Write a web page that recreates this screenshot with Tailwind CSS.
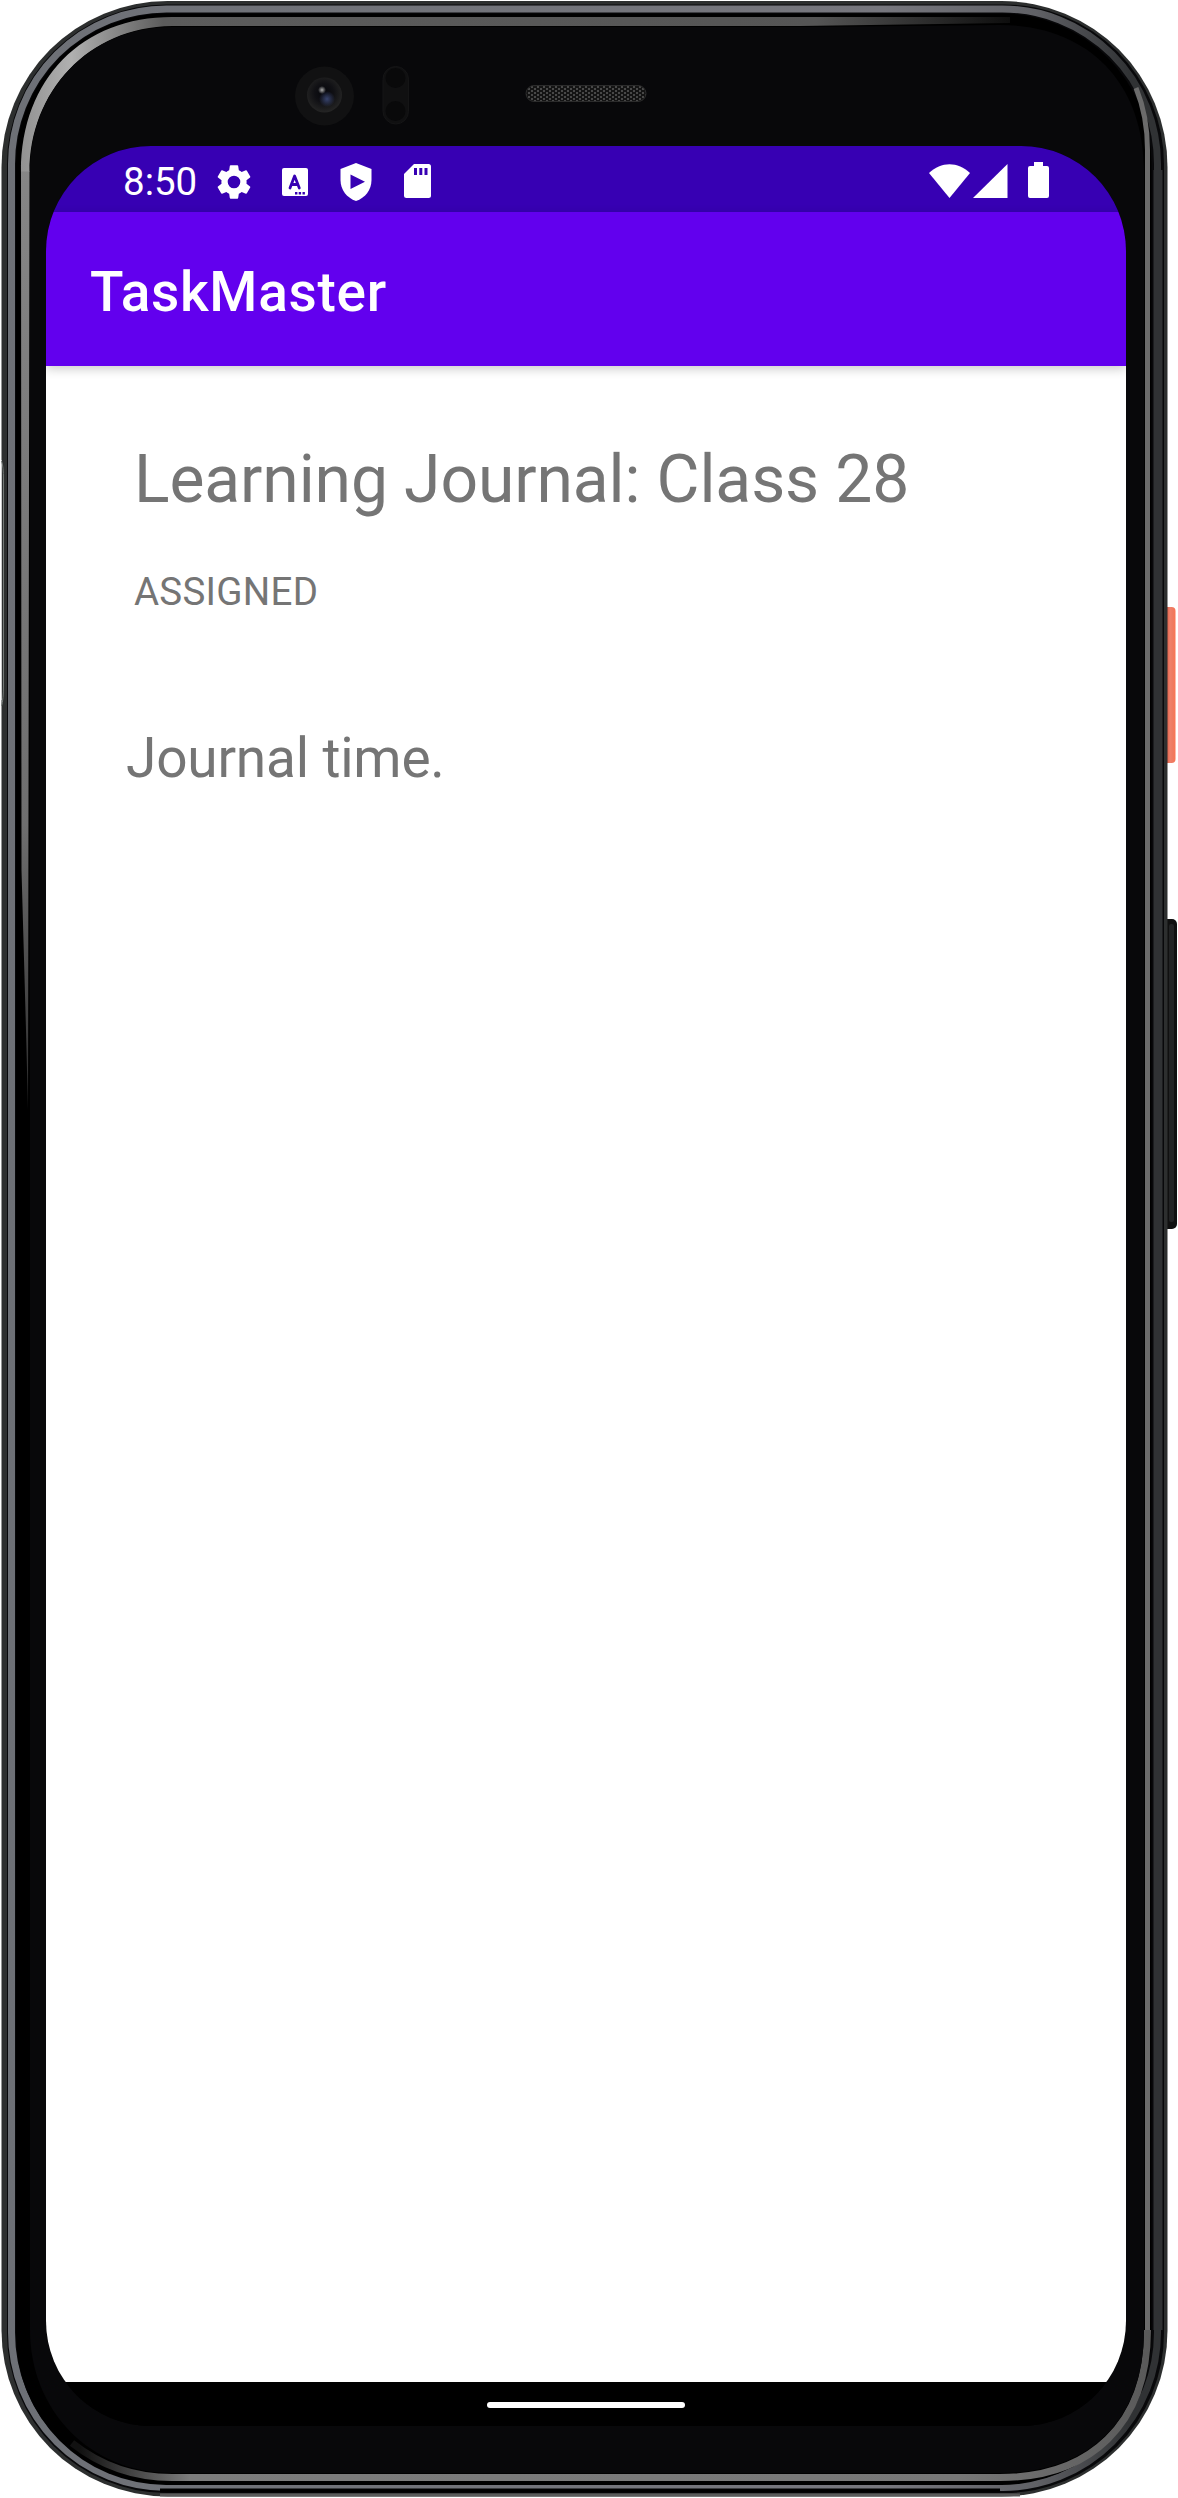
<!DOCTYPE html>
<html lang="en">
<head>
<meta charset="utf-8">
<title>TaskMaster</title>
<script src="https://cdn.jsdelivr.net/npm/@tailwindcss/browser@4"></script>
</head>
<body class="bg-white">
<div class="relative w-[1178px] h-[2498px] overflow-hidden pt-[146px] pl-[46px] font-[Roboto,sans-serif]">
  <!-- Device body -->
  <svg class="absolute inset-0" width="1178" height="2498" viewBox="0 0 1178 2498" fill="none">
    <defs>
      <linearGradient id="rim" x1="0" y1="0" x2="1178" y2="0" gradientUnits="userSpaceOnUse"><stop offset="0" stop-color="#6d7076"/><stop offset=".75" stop-color="#77777e"/><stop offset=".88" stop-color="#606166"/><stop offset=".96" stop-color="#303234"/><stop offset="1" stop-color="#303234"/></linearGradient>
      <linearGradient id="hlTop" x1="0" y1="0" x2="1020" y2="0" gradientUnits="userSpaceOnUse"><stop offset="0" stop-color="#858585"/><stop offset=".07" stop-color="#b0b0b0"/><stop offset=".16" stop-color="#5c5c5c"/><stop offset=".8" stop-color="#555"/><stop offset="1" stop-color="#0a0a0a"/></linearGradient>
      <linearGradient id="hlLeft" x1="0" y1="160" x2="0" y2="1110" gradientUnits="userSpaceOnUse"><stop offset="0" stop-color="#868686"/><stop offset=".7" stop-color="#6e6e6e"/><stop offset="1" stop-color="#2a2a2a"/></linearGradient>
      <linearGradient id="hlBot" x1="80" y1="0" x2="1178" y2="0" gradientUnits="userSpaceOnUse"><stop offset="0" stop-color="#111"/><stop offset=".1" stop-color="#7c7c7c"/><stop offset=".8" stop-color="#777"/><stop offset="1" stop-color="#555"/></linearGradient>
      <linearGradient id="power" x1="1166" y1="0" x2="1176" y2="0" gradientUnits="userSpaceOnUse"><stop offset="0" stop-color="#d9583f"/><stop offset=".4" stop-color="#f0806a"/><stop offset=".7" stop-color="#ee7a60"/><stop offset="1" stop-color="#ff7350"/></linearGradient>
      <radialGradient id="lens" cx="324" cy="93" r="19" gradientUnits="userSpaceOnUse"><stop offset="0" stop-color="#05060b"/><stop offset=".5" stop-color="#101014"/><stop offset=".8" stop-color="#1c1c1d"/><stop offset="1" stop-color="#242424"/></radialGradient>
      <radialGradient id="glint"><stop offset="0" stop-color="#aaa"/><stop offset="1" stop-color="#aaa" stop-opacity="0"/></radialGradient>
      <radialGradient id="blue"><stop offset="0" stop-color="#38446e"/><stop offset="1" stop-color="#38446e" stop-opacity="0"/></radialGradient>
      <pattern id="mesh" width="6" height="4" patternUnits="userSpaceOnUse"><rect width="6" height="4" fill="#141414"/><rect width="2" height="2" fill="#484848"/><rect x="3" y="2" width="2" height="2" fill="#484848"/></pattern>
    </defs>
    <rect x="1162" y="607" width="13.500" height="156" rx="4" fill="url(#power)"/>
    <rect x="1162" y="919" width="15" height="310" rx="5" fill="#101010"/>
    <rect x="1169" y="924" width="5" height="298" rx="2" fill="#222324"/>
    <rect x="1.500" y="1" width="1166" height="2495.500" rx="166" fill="#2d2f2f"/>
    <path d="M160 2495H1020" stroke="#5a5a5a" stroke-width="3"/>
    <rect x="7" y="4.500" width="1157" height="2488.500" rx="160" fill="#08080a"/>
    <rect x="11.500" y="9" width="1146" height="2478.500" rx="155" stroke="url(#rim)" stroke-width="7"/>
    <path d="M1158 170V2330" stroke="#303234" stroke-width="9"/>
    <path d="M160 2490.500H1000" stroke="#000" stroke-width="4"/>
    <rect x="16" y="13.500" width="1135.500" height="2471.500" rx="150" fill="#000"/>
    <path d="M21 172C21 78 83 17 172 17H1010V23L800 26H172C88 27 29.500 92 29.500 172Z" fill="url(#hlTop)"/>
    <path d="M1147.500 2330V150C1147.500 125 1143 105 1136 88" stroke="#6b6b6b" stroke-width="5"/>
    <path d="M1147.500 2330C1147.500 2425 1090 2477.500 1000 2477.500H172C130 2477.500 96 2462 72 2443" stroke="url(#hlBot)" stroke-width="7"/>
    <path d="M30 172C30 92 88 27 172 27H800L1000 25C1090 25 1144 85 1144 170V2330C1144 2420 1090 2473 1000 2473H172C90 2473 30 2410 30 2330Z" fill="#08080a"/>
    <path d="M21 171.500H29.500L28 1110L26 1030L21.500 870Z" fill="url(#hlLeft)"/>
    <path d="M0 460H1.500V700H0Z" fill="#fff"/>
    <path d="M1.500 461Q3.500 466 3.500 480V685Q3.500 700 1.500 706" stroke="#747a77"/>
    <circle cx="324.500" cy="96" r="29.500" fill="#111112"/>
    <circle cx="324.500" cy="95" r="17.500" fill="url(#lens)"/>
    <circle cx="327" cy="99" r="8" fill="url(#blue)"/>
    <circle cx="322" cy="90" r="4" fill="url(#glint)"/>
    <rect x="383" y="66.500" width="25.500" height="57.500" rx="12.700" fill="#101011" stroke="#151516"/>
    <circle cx="395.500" cy="78" r="10" fill="#09090a"/><circle cx="395.500" cy="111" r="10" fill="#09090a"/>
    <rect x="526" y="85.500" width="120" height="16" rx="8" fill="url(#mesh)" stroke="#2b2b2b"/>
  </svg>

  <!-- Screen -->
  <main class="relative w-[1080px] h-[2280px] rounded-[105px] overflow-hidden bg-black flex flex-col">
    <div class="h-[66px] shrink-0 bg-[#3700b3] flex items-center justify-between pl-[77px] pr-[77px] text-white">
      <div class="flex items-center">
        <span class="w-[90px] text-[38.5px] leading-[66px] pt-[6px]">8:50</span>
        <svg class="w-[42px] h-[42px] mt-[5px]" viewBox="0 0 24 24" fill="currentColor"><path d="M19.140 12.940c.04-.3.060-.61.060-.94s-.02-.64-.07-.94l2.030-1.580a.49.49 0 0 0 .12-.61l-1.920-3.320a.49.49 0 0 0-.59-.22l-2.390.96a7 7 0 0 0-1.620-.94l-.36-2.540a.48.48 0 0 0-.48-.41h-3.840a.47.47 0 0 0-.47.41l-.36 2.540c-.59.240-1.130.57-1.620.94l-2.390-.96a.48.48 0 0 0-.59.220L2.740 8.870a.47.47 0 0 0 .12.610l2.030 1.580c-.05.3-.09.63-.09.940s.02.640.07.940l-2.030 1.580a.49.49 0 0 0-.12.610l1.920 3.320c.12.220.37.290.59.220l2.390-.96c.5.380 1.030.7 1.620.940l.36 2.540c.05.240.24.410.48.410h3.840c.24 0 .44-.17.470-.41l.36-2.540a7 7 0 0 0 1.620-.94l2.390.96c.22.080.47 0 .59-.22l1.920-3.320a.47.47 0 0 0-.12-.61zM12 15.600A3.600 3.600 0 1 1 12 8.400a3.600 3.600 0 0 1 0 7.200"/></svg>
        <svg class="w-[26px] h-[28px] ml-[27px] mt-[5px]" viewBox="0 0 26 28"><rect width="26" height="28" rx="2" fill="currentColor"/><path d="M8 20 12.600 8 17.300 20M9.500 16.500h6.300" fill="none" stroke="#3700b3" stroke-width="2.800" stroke-linejoin="round" stroke-linecap="round"/><path d="M13 24h2.400v2.400H13zM16.700 24h2.400v2.400h-2.400zM20.500 24h2.400v2.400h-2.400z" fill="#3700b3"/></svg>
        <svg class="w-[32px] h-[38px] ml-[32px] mt-[5px]" viewBox="0 0 32 38"><path d="M16 0 31.500 6V17C31.500 27 25 35 16 38 7 35 .5 27 .5 17V6Z" fill="currentColor"/><path d="M10.500 11.500 25 18.700 10.500 26Z" fill="#3700b3"/></svg>
        <svg class="w-[27px] h-[34px] ml-[32px] mt-[4px]" viewBox="0 0 27 34"><path d="M10 0H24.500Q27 0 27 2.500V31.500Q27 34 24.500 34H2.500Q0 34 0 31.500V10Z" fill="currentColor"/><path d="M10 4h3v7h-3zM15.300 4h3v7h-3zM20.500 4h3v7h-3z" fill="#3700b3"/></svg>
      </div>
      <div class="flex items-end mt-[2px]">
        <svg class="w-[41px] h-[34px]" viewBox="0 0 41 34" fill="currentColor"><path d="M20.500 34 0 9C12-2.800 29-2.800 41 9Z"/></svg>
        <svg class="w-[35px] h-[34px] ml-[3px]" viewBox="0 0 35 34" fill="currentColor"><path d="M0 34H34.500V0Z"/></svg>
        <svg class="w-[21px] h-[36px] ml-[20px]" viewBox="0 0 21 36" fill="currentColor"><path d="M6 0h9v4h4q2 0 2 2v28q0 2-2 2H2q-2 0-2-2V6q0-2 2-2h4z"/></svg>
      </div>
    </div>
    <header class="relative z-10 h-[154px] shrink-0 bg-[#6200ee] flex items-center pl-[44px] shadow-[0_3px_10px_rgba(0,0,0,0.2)]">
      <h1 class="text-white text-[55px] font-medium leading-[64px] pt-[6px] tracking-[0.7px]">TaskMaster</h1>
    </header>
    <section class="grow bg-white flex flex-col text-[#757575] whitespace-nowrap">
      <h2 class="ml-[88px] mt-[75px] text-[66px] leading-[78px] tracking-[-0.12px]">Learning Journal: Class 28</h2>
      <p class="ml-[88px] mt-[50px] text-[38.5px] leading-[46px] tracking-[0.25px]">ASSIGNED</p>
      <p class="ml-[80px] mt-[111px] text-[55px] leading-[64px] tracking-[-0.2px]">Journal time.</p>
    </section>
    <nav class="h-[44px] shrink-0 bg-black flex justify-center">
      <div class="mt-[20px] w-[198px] h-[6px] rounded-full bg-white"></div>
    </nav>
  </main>
</div>
</body>
</html>
